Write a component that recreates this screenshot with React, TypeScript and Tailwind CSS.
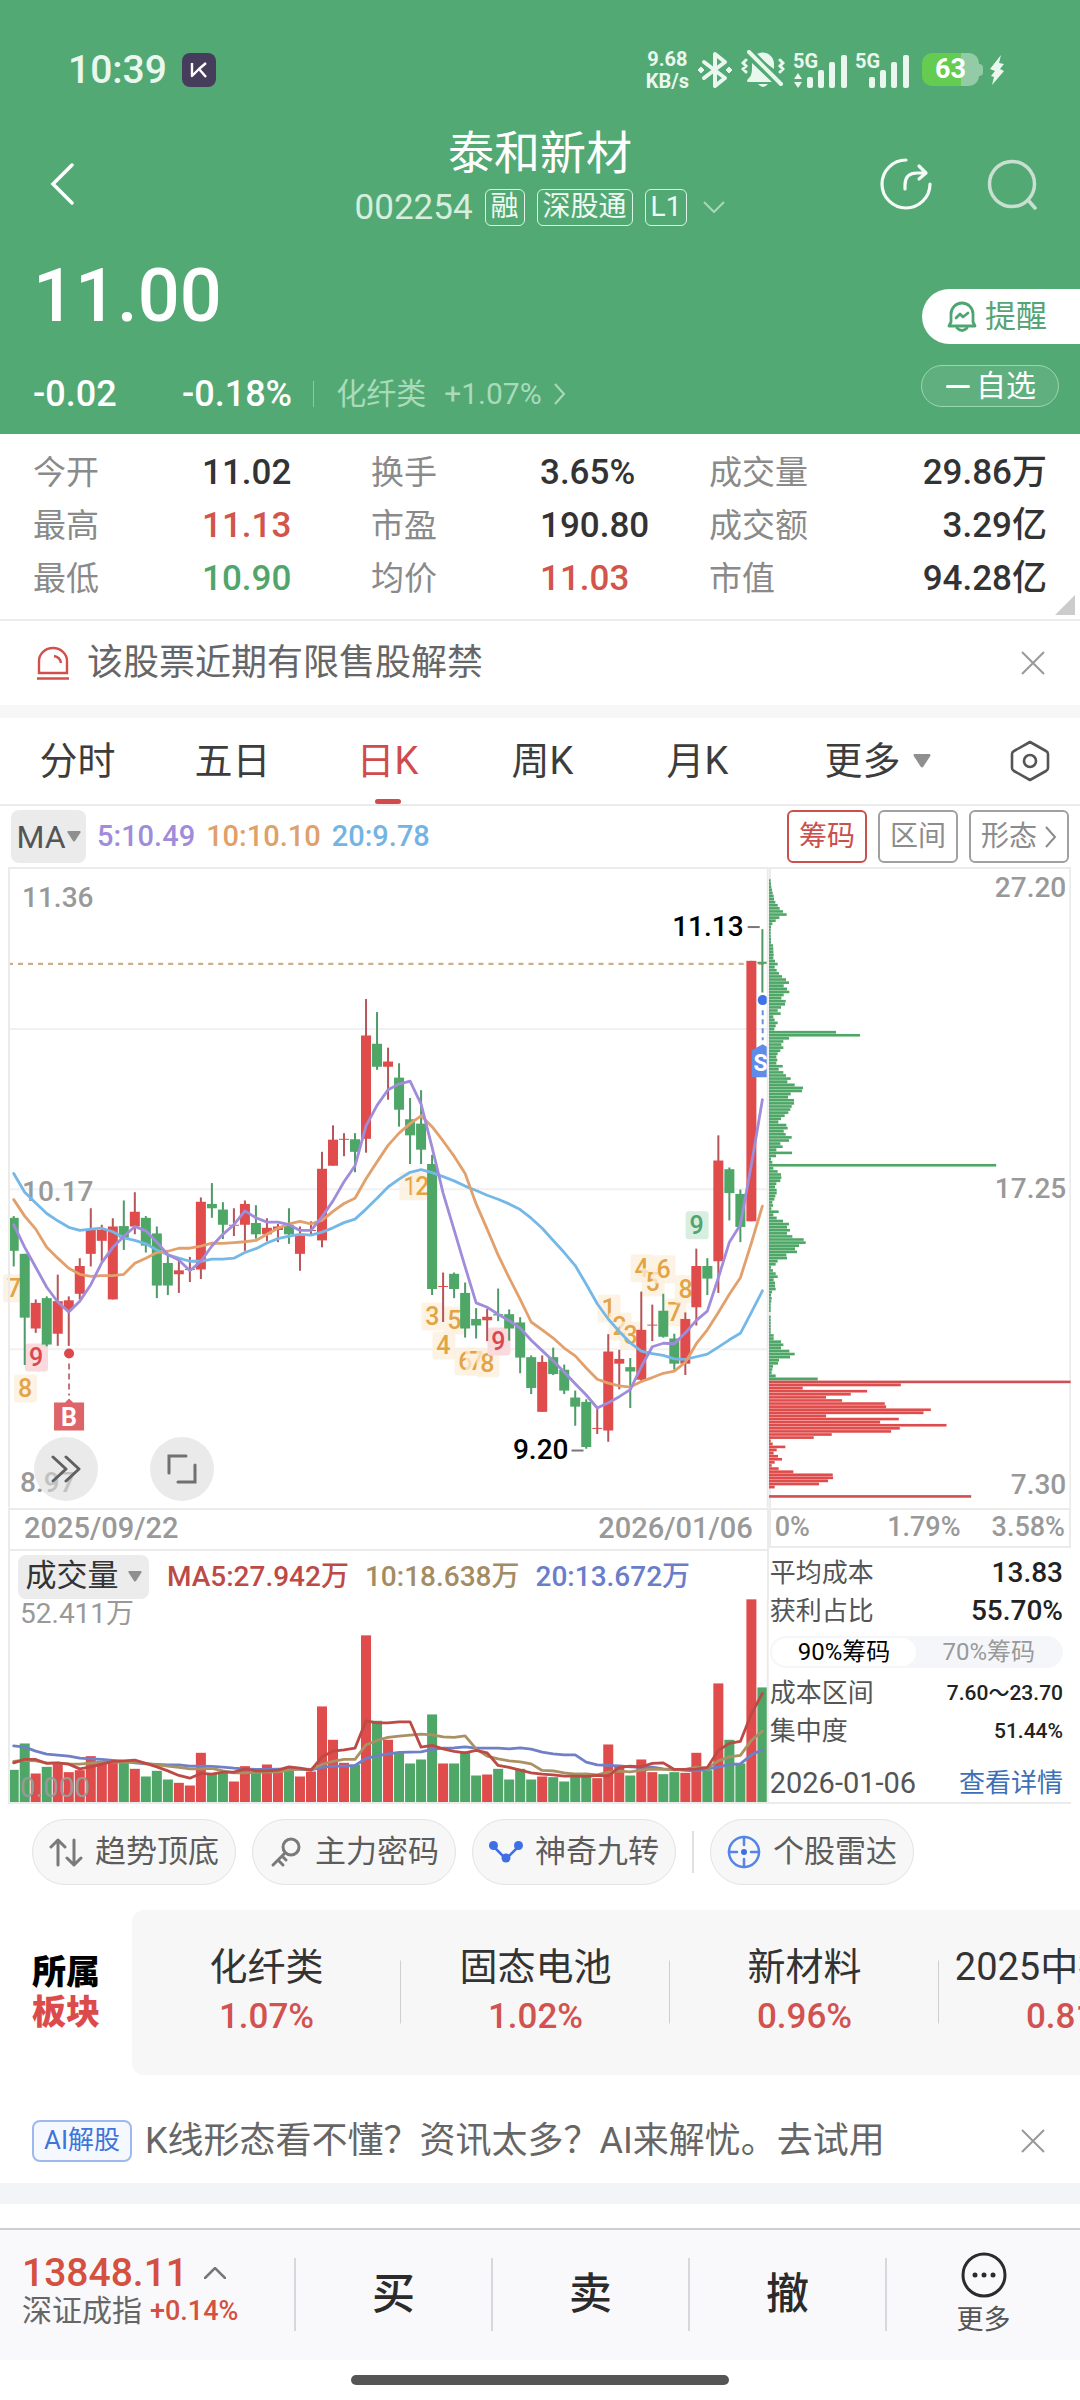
import React from "react";

/* ---------- palette ---------- */
const UP = "#e04b4b";
const UP_WICK = "#b5565a";
const DOWN = "#4ea767";
const DOWN_WICK = "#4f9a68";
const GREY = "#999999";

/* ---------- daily candles: [direction, body top, body bottom, high, low] ---------- */
type Candle = ["u" | "d", number, number, number, number];
const candles: Candle[] = [
  ["d", 822, 898, 818, 934], ["d", 905, 1052, 905, 1161], ["u", 1018, 1077, 1010, 1087],
  ["d", 1007, 1114, 1003, 1118], ["u", 1014, 1089, 953, 1117], ["u", 1012, 1032, 1003, 1117],
  ["u", 933, 997, 915, 1010], ["u", 850, 905, 800, 934], ["u", 850, 875, 838, 922],
  ["u", 842, 1010, 823, 1010], ["d", 841, 868, 782, 896], ["u", 808, 842, 763, 860],
  ["d", 822, 886, 818, 902], ["d", 858, 978, 842, 1007], ["d", 926, 978, 906, 1000],
  ["u", 943, 952, 920, 995], ["u", 940, 942, 912, 970], ["u", 785, 941, 775, 963],
  ["d", 790, 800, 742, 822], ["d", 803, 838, 786, 871], ["u", 838, 840, 800, 864],
  ["u", 790, 838, 782, 898], ["d", 834, 860, 793, 870], ["u", 845, 860, 823, 876],
  ["u", 842, 850, 836, 878], ["d", 838, 860, 800, 882], ["u", 862, 905, 842, 944],
  ["u", 850, 852, 830, 862], ["u", 709, 874, 670, 890], ["u", 642, 702, 609, 702],
  ["u", 640, 642, 627, 680], ["d", 641, 670, 627, 717], ["u", 402, 640, 318, 672],
  ["d", 421, 474, 348, 481], ["u", 462, 474, 430, 550], ["d", 499, 573, 466, 612],
  ["d", 595, 632, 546, 698], ["d", 605, 665, 528, 698], ["d", 698, 986, 677, 1000],
  ["u", 979, 981, 948, 1062], ["d", 951, 986, 948, 1007], ["d", 995, 1077, 971, 1098],
  ["d", 1055, 1070, 1030, 1100], ["u", 1050, 1058, 1032, 1106], ["d", 1044, 1047, 985, 1060],
  ["d", 1044, 1077, 1033, 1105], ["d", 1063, 1144, 1051, 1180], ["d", 1143, 1214, 1139, 1228],
  ["u", 1154, 1269, 1139, 1269], ["d", 1143, 1182, 1121, 1184], ["d", 1172, 1220, 1160, 1228],
  ["d", 1236, 1257, 1220, 1301], ["d", 1246, 1350, 1240, 1354], ["u", 1306, 1308, 1260, 1320],
  ["u", 1130, 1312, 1090, 1338], ["u", 1147, 1158, 1126, 1217], ["d", 1166, 1176, 1145, 1260],
  ["u", 1080, 1195, 992, 1202], ["u", 1068, 1070, 1022, 1106], ["d", 1036, 1096, 997, 1098],
  ["d", 1100, 1158, 1089, 1172], ["u", 1055, 1158, 1040, 1184], ["u", 933, 1028, 893, 1070],
  ["d", 933, 962, 915, 1000], ["u", 690, 922, 632, 995], ["d", 710, 765, 706, 828],
  ["d", 767, 843, 757, 878], ["u", 230, 830, 230, 830], ["d", 232, 237, 157, 303],
];

const ma5 = [838, 890, 936, 982, 1016, 1039, 1014, 976, 925, 890, 865, 842, 852, 878, 907, 919, 944, 922, 887, 860, 838, 806, 822, 832, 832, 838, 851, 851, 820, 783, 739, 702, 610, 563, 527, 514, 507, 560, 660, 765, 850, 935, 1018, 1028, 1044, 1059, 1076, 1104, 1128, 1152, 1177, 1204, 1230, 1260, 1248, 1234, 1218, 1165, 1119, 1111, 1112, 1087, 1058, 1037, 960, 878, 838, 700, 550];
const ma10 = [780, 818, 848, 890, 915, 938, 952, 957, 955, 955, 952, 927, 915, 902, 899, 892, 892, 887, 880, 881, 879, 877, 874, 860, 846, 836, 830, 836, 828, 807, 789, 777, 732, 693, 655, 627, 605, 587, 612, 645, 680, 720, 790, 848, 908, 960, 1010, 1062, 1080, 1099, 1122, 1140, 1168, 1194, 1203, 1209, 1212, 1199, 1190, 1180, 1175, 1155, 1112, 1080, 1040, 998, 960, 880, 795];
const ma20 = [720, 763, 788, 812, 829, 844, 851, 848, 846, 854, 868, 874, 882, 896, 907, 915, 922, 922, 917, 917, 915, 902, 893, 880, 870, 864, 860, 862, 855, 845, 833, 825, 802, 777, 751, 733, 717, 711, 718, 727, 737, 749, 759, 770, 779, 790, 803, 823, 846, 874, 902, 932, 975, 1020, 1055, 1084, 1110, 1129, 1135, 1139, 1147, 1148, 1142, 1136, 1120, 1103, 1088, 1040, 990];

/* ---------- volume ---------- */
const volumes = [713, 634, 724, 704, 694, 720, 714, 672, 686, 688, 692, 710, 733, 716, 742, 752, 760, 662, 724, 722, 748, 702, 720, 697, 712, 704, 733, 718, 523, 623, 692, 698, 310, 566, 623, 662, 694, 682, 547, 694, 694, 658, 730, 727, 710, 742, 710, 742, 733, 735, 748, 722, 724, 738, 637, 700, 730, 682, 720, 726, 720, 722, 662, 714, 454, 623, 694, 202, 466];
const vma5 = [692, 682, 682, 694, 692, 696, 710, 704, 696, 688, 686, 684, 694, 704, 716, 730, 738, 724, 726, 720, 720, 710, 716, 716, 714, 704, 708, 714, 674, 657, 653, 648, 566, 572, 572, 569, 569, 645, 640, 650, 658, 662, 655, 662, 700, 706, 714, 722, 726, 728, 732, 732, 733, 730, 732, 706, 702, 704, 694, 692, 712, 712, 711, 706, 655, 634, 628, 545, 484];
const vma10 = [688, 684, 686, 692, 693, 695, 696, 693, 690, 690, 689, 690, 694, 698, 702, 706, 710, 710, 709, 716, 722, 722, 721, 720, 720, 714, 710, 712, 697, 688, 682, 682, 638, 625, 616, 612, 609, 606, 608, 614, 616, 611, 650, 672, 680, 686, 689, 695, 715, 716, 722, 726, 725, 728, 720, 717, 719, 714, 711, 712, 713, 712, 705, 709, 686, 674, 670, 625, 597];
const vma20 = [641, 645, 657, 666, 669, 672, 678, 680, 682, 685, 688, 692, 695, 697, 698, 698, 702, 702, 703, 705, 708, 710, 712, 712, 711, 711, 712, 713, 706, 702, 702, 700, 679, 671, 665, 661, 660, 659, 652, 648, 647, 644, 648, 648, 648, 650, 647, 651, 660, 665, 668, 668, 690, 698, 700, 701, 704, 706, 705, 710, 712, 715, 716, 710, 705, 697, 695, 668, 653];

/* ---------- chip distribution, top price first ---------- */
const chipsAbove = [5, 6, 7, 9, 11, 14, 15, 19, 26, 32, 42, 53, 31, 20, 10, 6, 5, 5, 5, 6, 6, 12, 13, 13, 14, 13, 18, 26, 17, 23, 30, 39, 51, 60, 44, 54, 61, 44, 37, 50, 48, 36, 26, 35, 13, 17, 26, 20, 16, 201, 273, 60, 43, 37, 43, 34, 26, 22, 25, 22, 41, 29, 43, 51, 65, 55, 77, 102, 99, 65, 57, 75, 75, 68, 64, 58, 47, 36, 28, 52, 56, 44, 50, 68, 60, 34, 41, 22, 69, 21, 6, 10, 681, 13, 26, 36, 37, 34, 22, 18, 23, 23, 19, 16, 10, 12, 7, 29, 13, 23, 42, 60, 54, 63, 54, 70, 104, 110, 90, 78, 84, 52, 54, 26, 20, 6, 12, 20, 26, 14, 18, 18, 20, 9, 6, 8, 7, 5, 5, 5, 0, 5, 5, 5, 5, 5, 5, 14, 14, 36, 43, 36, 61, 77, 63, 30, 27, 12, 10, 8, 20, 146];
const chipsBelow = [904, 395, 101, 294, 245, 171, 219, 347, 351, 485, 463, 171, 389, 333, 532, 392, 366, 188, 134, 5, 11, 49, 23, 14, 27, 39, 17, 8, 29, 73, 191, 192, 177, 150, 17, 0, 0, 606];

const cx = (i: number) => 5.7 + 11 * i;
const py = (v: number) => v * 0.4337 - 6;
const vy = (v: number) => v / 3 - 67;
const line = (data: number[], y: (v: number) => number) =>
  data.map((v, i) => `${cx(i).toFixed(1)},${y(v).toFixed(1)}`).join(" ");

/* ---------- nine-turn markers: [x, y, digit, kind] ---------- */
type Mark = [number, number, string, "y" | "r" | "g"];
const marks: Mark[] = [
  [6, 421, "7", "y"], [17, 521, "8", "y"], [28, 490, "9", "r"],
  [402, 319, "1", "y"], [414, 319, "2", "y"], [424, 449, "3", "y"], [435, 478, "4", "y"],
  [446, 453, "5", "y"], [457, 494, "6", "y"], [468, 494, "7", "y"], [479, 496, "8", "y"],
  [490, 474, "9", "r"], [600, 441, "1", "y"], [611, 459, "2", "y"], [622, 468, "3", "y"],
  [633, 401, "4", "y"], [644, 415, "5", "y"], [655, 402, "6", "y"], [666, 445, "7", "y"],
  [677, 422, "8", "y"], [688, 358, "9", "g"],
];
const markColor = { y: "#e3a445", r: "#d9484f", g: "#4fa56b" };
const markBg = { y: "#fcefdc", r: "#fadadd", g: "#d8eee0" };

function CandleChart() {
  return (
    <svg viewBox="0 0 760 640" className="block h-auto w-full overflow-visible" role="img" aria-label="日K线图">
      {[387, 756, 1125].map((v) => (
        <line key={v} x1="0" x2="760" y1={py(v)} y2={py(v)} stroke="#f1f1f1" strokeWidth="2" />
      ))}
      <line x1="0" x2="759" y1={py(237)} y2={py(237)} stroke="#c9b08a" strokeWidth="2" strokeDasharray="5 5" />
      <g fill={GREY} fontSize="28" fontWeight="500">
        <text x="14" y="40">11.36</text>
        <text x="14" y="334">10.17</text>
        <text x="12" y="624">8.97</text>
      </g>
      {marks.map(([x, y, d, k], i) => (
        <g key={i}>
          <rect x={x - 11} y={y - 14} width="23" height="28" rx="3" fill={markBg[k]} fillOpacity={k === "y" ? 0.75 : 1} />
          <text x={x} y={y + 9} fontSize="25" fontWeight="500" textAnchor="middle" fill={markColor[k]}>{d}</text>
        </g>
      ))}
      {candles.map(([dir, top, bottom, high, low], i) => (
        <g key={i} fill={dir === "u" ? UP : DOWN}>
          <rect x={cx(i) - 1} y={py(high)} width="2" height={py(low) - py(high)} fill={dir === "u" ? UP_WICK : DOWN_WICK} />
          <rect x={cx(i) - 5} y={py(top)} width="10" height={Math.max(1, py(bottom) - py(top))} />
        </g>
      ))}
      <g fill="none" strokeWidth="2.8" strokeLinejoin="round" strokeLinecap="round">
        <polyline points={line(ma20, py)} stroke="#74b8e8" />
        <polyline points={line(ma10, py)} stroke="#e2a06c" />
        <polyline points={line(ma5, py)} stroke="#a08cda" />
      </g>
      <g fontSize="28" fontWeight="500" fill="#000000">
        <text x="735" y="69" textAnchor="end">11.13</text>
        <text x="560" y="591" textAnchor="end">9.20</text>
      </g>
      <g stroke="#777777" strokeWidth="2">
        <line x1="739" x2="751" y1="60" y2="60" />
        <line x1="563" x2="575" y1="583" y2="583" />
      </g>
      <circle cx="61" cy="486" r="5" fill="#dd484d" />
      <line x1="61" x2="61" y1="496" y2="528" stroke="#bf7479" strokeWidth="2" strokeDasharray="6 4" />
      <path d="M46 535h11l4-4 4 4h11v28H46z" fill="#dd6468" />
      <text x="61" y="558" fontSize="25" fontWeight="700" textAnchor="middle" fill="#ffffff">B</text>
      <circle cx="754" cy="133" r="5" fill="#3f72e6" />
      <line x1="754" x2="754" y1="143" y2="173" stroke="#6b90dd" strokeWidth="2" strokeDasharray="5 4" />
      <path d="M743 183l11-6 5 3v30h-16z" fill="#5e8ce8" />
      <text x="752" y="204" fontSize="23" fontWeight="700" textAnchor="middle" fill="#ffffff">S</text>
      <path d="M1 640V1h758v639" fill="none" stroke="#ebebeb" strokeWidth="2" />
    </svg>
  );
}

function VolumeChart() {
  return (
    <svg viewBox="0 0 760 203" className="block h-auto w-full" role="img" aria-label="成交量图">
      {volumes.map((v, i) => (
        <rect key={i} x={cx(i) - 5} y={vy(v)} width="10" height={203 - vy(v)} fill={candles[i][0] === "u" ? UP : DOWN} />
      ))}
      <g fill={GREY} fontSize="28">
        <text x="12" y="24">52.411万</text>
        <text x="12" y="198">0.000</text>
      </g>
      <g fill="none" strokeWidth="2.8" strokeLinejoin="round" strokeLinecap="round">
        <polyline points={line(vma20, vy)} stroke="#6f80c8" />
        <polyline points={line(vma10, vy)} stroke="#a99164" />
        <polyline points={line(vma5, vy)} stroke="#bd4a45" />
      </g>
      <path d="M1 0V203M759 0V203" stroke="#ebebeb" strokeWidth="2" />
    </svg>
  );
}

function ChipChart() {
  const rows = [...chipsAbove, ...chipsBelow];
  return (
    <svg viewBox="0 0 302 640" className="block h-auto w-full" role="img" aria-label="筹码分布图">
      <path d="M1 640V1h300v639" fill="none" stroke="#ebebeb" strokeWidth="2" />
      {rows.map((w, i) => {
        const above = i < chipsAbove.length;
        const y = 12.2 + i * 3.092;
        return (
          <g key={i}>
            <rect x="0" y={y} width={w / 3} height="2.6" fill={above ? DOWN : w > 600 ? "#cf4f52" : UP} />
            <rect x="0" y={y + 2.6} width={Math.min(w, rows[i + 1] ?? 0) / 3} height="0.5" fill={above ? "#7fc08f" : "#ec8a86"} />
          </g>
        );
      })}
      <g fill={GREY} fontSize="28" fontWeight="500" textAnchor="end">
        <text x="297" y="30">27.20</text>
        <text x="297" y="331">17.25</text>
        <text x="297" y="626">7.30</text>
      </g>
    </svg>
  );
}

/* ---------- small shared pieces ---------- */
function Caret({ className }: { className: string }) {
  return (
    <svg viewBox="0 0 14 11" className={className} aria-hidden="true">
      <path d="M1 0h12q1 0.500.5 1.500L8 10q-1 1.200-2 0L0.500 1.500Q0 0 1 0z" fill="#8f8f8f" />
    </svg>
  );
}

function CloseButton() {
  return (
    <button type="button" aria-label="关闭" className="flex size-6 items-center justify-center">
      <svg viewBox="0 0 24 24" className="size-6" fill="none" stroke="#999999" strokeWidth="2">
        <path d="M1 1l22 22M23 1L1 23" />
      </svg>
    </button>
  );
}

function Signal({ arrows }: { arrows?: boolean }) {
  return (
    <svg viewBox="0 0 55 40" className="h-10 w-[55px] overflow-visible" fill="#eaf7ee" aria-hidden="true">
      <text x="0" y="18" fontSize="20" fontWeight="700">5G</text>
      <rect x="14" y="27" width="6" height="11" rx="2" />
      <rect x="25" y="20" width="6" height="18" rx="2" />
      <rect x="36" y="12" width="6" height="26" rx="2" />
      <rect x="48" y="5" width="6" height="33" rx="2" />
      {arrows && <path d="M5 23l4 6H1zM5 38l4-6H1z" />}
    </svg>
  );
}

function StatusBar() {
  return (
    <div className="flex h-[84px] items-center pt-[19px] pr-[75px] pl-[68px] text-[#eaf7ee]">
      <span className="text-[39px] leading-10 font-medium">10:39</span>
      <svg viewBox="0 0 34 34" className="ml-[15px] size-[34px]" aria-hidden="true">
        <rect width="34" height="34" rx="8" fill="#463d5c" />
        <path d="M10 10v13l7-7 7 8M24 10l-7 6" fill="none" stroke="#fff" strokeWidth="2.400" strokeLinejoin="round" />
      </svg>
      <div className="ml-auto text-center text-xl leading-[22px] font-bold">
        <div>9.68</div>
        <div>KB/s</div>
      </div>
      <svg viewBox="0 0 36 38" className="ml-2 h-[38px] w-9" aria-hidden="true">
        <path d="M7 11l21 16-10 8V3l10 8L7 27" fill="none" stroke="#eaf7ee" strokeWidth="4" strokeLinejoin="round" strokeLinecap="round" />
        <path d="M4 16l3 3-3 3-3-3zM32 16l3 3-3 3-3-3z" fill="#eaf7ee" stroke="#eaf7ee" />
      </svg>
      <svg viewBox="0 0 44 40" className="ml-2 h-10 w-11" aria-hidden="true">
        <path d="M14 5c8-6 19-1 19 9v5zM11 13l20 19H7q-2-1 0-3 4-3 4-10z" fill="#eaf7ee" />
        <path d="M17 34h10q-5 6-10 0z" fill="#eaf7ee" />
        <path d="M8 2l32 32" stroke="#53a974" strokeWidth="9" />
        <path d="M8 2l32 32" stroke="#eaf7ee" strokeWidth="4" strokeLinecap="round" />
        <path d="M5 10l-3 3 3 3-3 3 3 3M39 10l3 3-3 3 3 3-3 3" fill="none" stroke="#eaf7ee" strokeWidth="3" strokeLinecap="round" />
      </svg>
      <div className="ml-2 flex gap-[7px]">
        <Signal arrows />
        <Signal />
      </div>
      <div className="ml-3 flex items-center">
        <div className="flex h-[33px] w-[57px] items-center justify-center rounded-[10px] bg-linear-to-r from-[#64cc50] from-69% to-[#93cba6] to-69% text-[27px] font-bold text-white">
          63
        </div>
        <div className="h-3 w-1 rounded-r bg-[#93cba6]" />
      </div>
      <svg viewBox="0 0 16 32" className="ml-[6px] h-8 w-4" aria-hidden="true">
        <path d="M12 1L1 15l5 2-4 5 3 1-2 8L15 17l-4-2 4-5-5-1z" fill="#eaf7ee" />
      </svg>
    </div>
  );
}

function Tag({ children }: { children: React.ReactNode }) {
  return (
    <span className="flex h-[37px] items-center rounded-md border border-[#dff2e6] px-[5px] text-[28px] leading-none text-[#eefaf2]">
      {children}
    </span>
  );
}

function Header() {
  return (
    <header className="bg-[#53a974] pt-[18px] pb-[19px]">
      <StatusBar />
      <div className="grid grid-cols-[1fr_auto_1fr] items-center px-[50px] pt-[23px]">
        <button type="button" aria-label="返回" className="mt-4 w-6">
          <svg viewBox="0 0 24 42" className="h-[42px] w-6" fill="none" stroke="#fff" strokeWidth="3.500" strokeLinecap="round">
            <path d="M22 2L3 21l19 19" />
          </svg>
        </button>
        <div className="flex flex-col items-center">
          <h1 className="text-[46px] leading-[56px] text-white">泰和新材</h1>
          <div className="mt-[7px] flex h-[38px] items-center gap-3">
            <span className="text-[35px] leading-none text-[#d5eedd]">002254</span>
            <Tag>融</Tag>
            <Tag>深股通</Tag>
            <Tag>L1</Tag>
            <svg viewBox="0 0 22 12" className="ml-1 h-3 w-[22px]" fill="none" stroke="#a9d8b9" strokeWidth="2">
              <path d="M1 1l10 10L21 1" />
            </svg>
          </div>
        </div>
        <div className="mt-4 -mr-2 flex justify-end gap-[54px]">
          <button type="button" aria-label="分享">
            <svg viewBox="0 0 52 52" className="size-[52px]" fill="none" stroke="#f4fbf6" strokeWidth="3.200" strokeLinecap="round" strokeLinejoin="round">
              <path d="M26 2a24 24 0 1 0 24 24" />
              <path d="M25 31v-4q0-12 12-12h8M39 8l7 7-7 6" />
            </svg>
          </button>
          <button type="button" aria-label="搜索">
            <svg viewBox="0 0 52 52" className="size-[52px]" fill="none" stroke="#c9dfd1" strokeWidth="3.500" strokeLinecap="round">
              <circle cx="26" cy="26" r="22.500" />
              <path d="M42 42l7 8" />
            </svg>
          </button>
        </div>
      </div>
      <div className="mt-[5px] flex items-end justify-between pl-[33px]">
        <div>
          <div className="text-[74px] leading-[130px] font-medium text-white">11.00</div>
          <div className="mt-[12px] flex h-[42px] items-center text-white">
            <span className="w-[149px] text-4xl font-medium">-0.02</span>
            <span className="text-4xl font-medium">-0.18%</span>
            <span className="ml-[21px] h-[26px] w-px bg-[#8fc9a4]" />
            <a href="#sector" className="ml-[22px] flex items-center text-3xl text-[#a9dbbb]">
              化纤类
              <span className="ml-[18px]">+1.07%</span>
              <svg viewBox="0 0 12 22" className="ml-3 h-[22px] w-3" fill="none" stroke="currentColor" strokeWidth="2">
                <path d="M1 1l9 10-9 10" />
              </svg>
            </a>
          </div>
        </div>
        <div className="flex flex-col items-end gap-[21px] pb-2">
          <button type="button" className="flex h-[55px] w-[158px] items-center gap-2 rounded-l-full bg-white pl-[25px] text-[31px] leading-none text-[#55a476]">
            <svg viewBox="0 0 30 31" className="h-[31px] w-[30px] shrink-0" fill="none" stroke="#4fa572" strokeWidth="2.800" strokeLinejoin="round" strokeLinecap="round">
              <path d="M4 21V13a11 11 0 0 1 22 0v8l2 4H2z" />
              <path d="M10 27q5 5 10 0M9 17l4-4 3 3 5-4" />
            </svg>
            提醒
          </button>
          <button type="button" className="mr-[21px] flex h-[42px] w-[138px] items-center gap-[6px] rounded-full border border-[#9ad6b0] bg-white/8 pl-6 text-3xl leading-none text-white">
            <span className="h-[3px] w-6 rounded bg-white" />
            自选
          </button>
        </div>
      </div>
    </header>
  );
}

const quotes: [string, string, string][][] = [
  [["今开", "11.02", "text-[#333333]"], ["换手", "3.65%", "text-[#333333]"], ["成交量", "29.86万", "text-[#333333]"]],
  [["最高", "11.13", "text-[#d2544a]"], ["市盈", "190.80", "text-[#333333]"], ["成交额", "3.29亿", "text-[#333333]"]],
  [["最低", "10.90", "text-[#4fa56b]"], ["均价", "11.03", "text-[#d2544a]"], ["市值", "94.28亿", "text-[#333333]"]],
];

function Quotes() {
  return (
    <section className="relative border-b-2 border-[#ebebeb] px-[33px] pt-3 pb-[14px]">
      {quotes.map((row, r) => (
        <dl key={r} className="grid grid-cols-[1fr_1fr_1fr_1fr_1fr_1fr] leading-[53px]">
          {row.map(([label, value, color], c) => (
            <React.Fragment key={label}>
              <dt className="text-[33px] text-[#8a8a8a]">{label}</dt>
              <dd className={`text-[35px] font-medium whitespace-nowrap ${color} ${c === 2 ? "flex justify-end" : ""}`}>{value}</dd>
            </React.Fragment>
          ))}
        </dl>
      ))}
      <svg viewBox="0 0 20 20" className="absolute right-[5px] bottom-1 size-5" aria-hidden="true">
        <path d="M20 0v20H0z" fill="#cccccc" />
      </svg>
    </section>
  );
}

function Notice() {
  return (
    <section className="flex h-[84px] items-center pr-[35px] pl-9">
      <svg viewBox="0 0 34 34" className="h-[34px] w-[34px]" fill="none" stroke="#d2504c" strokeWidth="2.400">
        <path d="M3 27V15a14 13 0 0 1 28 0v12z" />
        <path d="M1 32.500h32M18 10q6 1 7 7" />
      </svg>
      <span className="ml-[17px] text-4xl text-[#666666]">该股票近期有限售股解禁</span>
      <div className="ml-auto flex"><CloseButton /></div>
    </section>
  );
}

function PeriodTabs() {
  const tabs = ["分时", "五日", "日K", "周K", "月K"];
  return (
    <nav className="grid h-[88px] grid-cols-[155fr_155fr_155fr_155fr_155fr_205fr_100fr] border-b-2 border-[#ebebeb] text-[38px] text-[#3d3d3d]">
      {tabs.map((t) => (
        <button key={t} type="button" className={t === "日K" ? "relative text-[#d04c4c]" : ""}>
          {t}
          {t === "日K" && <span className="absolute bottom-0 left-1/2 h-[5px] w-[26px] -translate-x-1/2 rounded-full bg-[#d04c4c]" />}
        </button>
      ))}
      <button type="button" className="flex items-center justify-center gap-3">
        更多
        <Caret className="h-[14px] w-[18px]" />
      </button>
      <button type="button" aria-label="设置" className="flex items-center justify-center">
        <svg viewBox="0 0 40 42" className="h-[42px] w-10" fill="none" stroke="#555555" strokeWidth="2.600" strokeLinejoin="round">
          <path d="M20 2l16 9q2 1 2 3v14q0 2-2 3l-16 9-16-9q-2-1-2-3V14q0-2 2-3z" />
          <circle cx="20" cy="21" r="6" />
        </svg>
      </button>
    </nav>
  );
}

function IndicatorRow() {
  return (
    <div className="flex h-[61px] items-center px-[11px]">
      <button type="button" className="flex h-[53px] w-[75px] items-center justify-center gap-px rounded-lg bg-[#ebebeb] text-[32px] text-[#555555]">
        MA
        <Caret className="h-[11px] w-[14px]" />
      </button>
      <div className="ml-[11px] flex gap-[11px] text-[29px] font-medium">
        <span className="text-[#a08cda]">5:10.49</span>
        <span className="text-[#e0a06a]">10:10.10</span>
        <span className="text-[#74b4e2]">20:9.78</span>
      </div>
      <div className="ml-auto flex gap-[11px] text-[28px] text-[#8c8c8c]">
        <button type="button" className="h-[53px] w-20 rounded-md border-2 border-[#c9504c] text-[#c9504c]">筹码</button>
        <button type="button" className="h-[53px] w-20 rounded-md border-2 border-[#a0a0a0]">区间</button>
        <button type="button" className="flex h-[53px] w-[100px] items-center justify-center gap-2 rounded-md border-2 border-[#a0a0a0]">
          形态
          <svg viewBox="0 0 12 22" className="h-[22px] w-3" fill="none" stroke="currentColor" strokeWidth="2">
            <path d="M1 1l9 10-9 10" />
          </svg>
        </button>
      </div>
    </div>
  );
}

function ChartArea() {
  return (
    <section className="mr-[9px] ml-2 grid grid-cols-[760fr_302fr] border-b-2 border-[#ebebeb]">
      <div>
        <div className="relative">
          <CandleChart />
          <button type="button" aria-label="快进" className="absolute bottom-[7px] left-[26px] flex size-16 items-center justify-center rounded-full bg-[#dcdcdc]/60">
            <svg viewBox="0 0 30 28" className="h-7 w-[30px]" fill="none" stroke="#606060" strokeWidth="3" strokeLinecap="round" strokeLinejoin="round">
              <path d="M2 2l13 12L2 26M15 2l13 12-13 12" />
            </svg>
          </button>
          <button type="button" aria-label="全屏" className="absolute bottom-[7px] left-[142px] flex size-16 items-center justify-center rounded-full bg-[#dcdcdc]/60">
            <svg viewBox="0 0 30 30" className="size-[30px]" fill="none" stroke="#707070" strokeWidth="3" strokeLinecap="round">
              <path d="M2 19V2h17M28 11v17H11" />
            </svg>
          </button>
        </div>
        <div className="flex h-[43px] items-center justify-between border-2 border-[#ebebeb] pr-[14px] pl-[14px] text-[29px] font-medium text-[#999999]">
          <span>2025/09/22</span>
          <span>2026/01/06</span>
        </div>
        <div className="flex h-12 items-center gap-4 border-x-2 border-[#ebebeb] pt-1 pl-2 text-[28px] font-medium whitespace-nowrap">
          <button type="button" className="mr-[2px] flex h-11 w-[131px] items-center justify-center gap-[9px] rounded-lg bg-[#ececec] text-[31px] font-normal text-[#333333]">
            成交量
            <Caret className="h-[11px] w-[14px]" />
          </button>
          <span className="text-[#bd4a45]">MA5:27.942万</span>
          <span className="text-[#a48c62]">10:18.638万</span>
          <span className="text-[#6a7dcb]">20:13.672万</span>
        </div>
        <VolumeChart />
      </div>
      <div className="flex flex-col">
        <ChipChart />
        <div className="flex h-10 items-center justify-between border-2 border-[#ebebeb] px-1 text-[27px] font-medium text-[#999999]">
          <span className="flex-1">0%</span>
          <span className="mr-[31px]">1.79%</span>
          <span>3.58%</span>
        </div>
        <div className="flex flex-1 flex-col pt-[6px] pr-2 pl-px text-[26px] leading-[38px] text-[#555555]">
          <div className="flex items-center justify-between">平均成本<span className="text-[28px] font-medium text-[#222222]">13.83</span></div>
          <div className="flex items-center justify-between">获利占比<span className="text-[28px] font-medium text-[#222222]">55.70%</span></div>
          <div className="my-[6px] flex h-8 rounded-full bg-[#f5f6f9] p-[2px] text-2xl">
            <button type="button" className="flex flex-1 items-center justify-center rounded-full bg-white text-black">90%筹码</button>
            <button type="button" className="flex flex-1 items-center justify-center text-[#999999]">70%筹码</button>
          </div>
          <div className="flex items-center justify-between">成本区间<span className="text-[21px] font-medium text-[#222222]">7.60～23.70</span></div>
          <div className="flex items-center justify-between">集中度<span className="text-[21px] font-medium text-[#222222]">51.44%</span></div>
          <div className="mt-auto flex items-center justify-between">
            <span className="text-[29px]">2026-01-06</span>
            <a href="#details" className="text-[#3c70b8]">查看详情</a>
          </div>
        </div>
      </div>
    </section>
  );
}

function ToolChip({ label, children }: { label: string; children: React.ReactNode }) {
  return (
    <button type="button" className="flex h-[66px] w-[204px] items-center justify-center gap-3 rounded-full border border-[#e3e3e3] bg-[#f7f7f7] text-[31px] whitespace-nowrap text-[#5c5c5c]">
      <svg viewBox="0 0 34 34" className="size-[34px] shrink-0" fill="none" strokeLinecap="round" strokeLinejoin="round" aria-hidden="true">
        {children}
      </svg>
      {label}
    </button>
  );
}

function Tools() {
  return (
    <section className="flex h-[106px] items-center gap-4 pb-[9px] pl-8">
      <ToolChip label="趋势顶底">
        <path d="M9 30V5M2 12l7-7 7 7M25 5v25M18 23l7 7 7-7" stroke="#7a7a7a" strokeWidth="3" />
      </ToolChip>
      <ToolChip label="主力密码">
        <g stroke="#7a7a7a" strokeWidth="3">
          <circle cx="22" cy="12" r="8" />
          <path d="M16 18L4 30M9 25l5 5M13 21l4 4" />
        </g>
      </ToolChip>
      <ToolChip label="神奇九转">
        <path d="M4 11l13 13L30 11" stroke="#3f6fe4" strokeWidth="2.500" />
        <g fill="#3f6fe4">
          <circle cx="4.500" cy="10.500" r="4.500" />
          <circle cx="17" cy="23" r="4.500" />
          <circle cx="29.500" cy="10.500" r="4.500" />
        </g>
      </ToolChip>
      <span className="h-[42px] w-[2px] bg-[#e0e0e0]" />
      <ToolChip label="个股雷达">
        <circle cx="17" cy="17" r="15" stroke="#5585e6" strokeWidth="2.500" />
        <path d="M17 2v8M17 24v8M2 17h8M24 17h8" stroke="#5585e6" strokeWidth="2.500" />
        <circle cx="17" cy="17" r="3" fill="#3f6fe4" />
      </ToolChip>
    </section>
  );
}

const sectors = [["化纤类", "1.07%"], ["固态电池", "1.02%"], ["新材料", "0.96%"], ["2025中报预增", "0.81%"]];

function Sectors() {
  return (
    <section id="sector" className="flex items-center overflow-hidden pl-8">
      <h2 className="w-[100px] shrink-0 text-[34px] leading-10 font-black text-black">
        所属
        <br />
        <span className="text-[#dc4b4b]">板块</span>
      </h2>
      <ul className="flex h-[165px] shrink-0 items-center rounded-l-xl bg-[#f7f7f7]">
        {sectors.map(([name, pct], i) => (
          <li key={name} className={`relative w-[269px] text-center whitespace-nowrap ${i < 3 ? "after:absolute after:top-1/2 after:right-0 after:h-[63px] after:w-px after:-translate-y-1/2 after:bg-[#cfcfcf]" : ""}`}>
            <div className="text-[38px] leading-[50px] text-[#333333]">{name}</div>
            <div className="text-[35px] leading-[50px] font-medium text-[#d1524f]">{pct}</div>
          </li>
        ))}
      </ul>
    </section>
  );
}

function AiBanner() {
  return (
    <section className="flex h-[108px] items-center pt-6 pr-[35px] pl-8">
      <span className="flex h-[42px] w-[100px] items-center justify-center rounded-lg border-2 border-[#9db9ee] bg-[#f5f9ff] text-[26px] text-[#3f74d8]">AI解股</span>
      <a href="#ai" className="ml-[13px] text-4xl text-[#666666]">K线形态看不懂？资讯太多？AI来解忧。去试用</a>
      <div className="ml-auto flex"><CloseButton /></div>
    </section>
  );
}

function TradeBar() {
  return (
    <footer className="grid h-[132px] grid-cols-[294fr_197fr_197fr_197fr_195fr] items-center border-t-2 border-[#cfcfcf] bg-[#f9f9fc]">
      <div className="pb-2 pl-[22px] whitespace-nowrap">
        <button type="button" className="flex items-center gap-4 text-[39px] leading-10 font-medium text-[#d4503f]">
          13848.11
          <svg viewBox="0 0 22 12" className="h-3 w-[22px]" fill="none" stroke="#777777" strokeWidth="2.500" strokeLinecap="round">
            <path d="M1 11L11 1l10 10" />
          </svg>
        </button>
        <div className="flex items-center gap-2 text-3xl leading-9 text-[#666666]">
          深证成指<span className="text-[27px] font-medium text-[#d4503f]">+0.14%</span>
        </div>
      </div>
      {["买", "卖", "撤"].map((t) => (
        <button key={t} type="button" className="h-[73px] border-l-2 border-[#d8d8dc] text-[43px] leading-none font-medium text-[#2b2b2b]">
          {t}
        </button>
      ))}
      <button type="button" className="flex h-[73px] flex-col items-center justify-center border-l-2 border-[#d8d8dc] text-[27px] leading-9 text-[#555555]">
        <svg viewBox="0 0 46 46" className="size-[46px] shrink-0" aria-hidden="true">
          <circle cx="23" cy="23" r="21" fill="none" stroke="#2b2b2b" strokeWidth="3" />
          <g fill="#2b2b2b">
            <circle cx="14" cy="23" r="2.500" />
            <circle cx="23" cy="23" r="2.500" />
            <circle cx="32" cy="23" r="2.500" />
          </g>
        </svg>
        <span className="mt-1">更多</span>
      </button>
    </footer>
  );
}

export default function App() {
  return (
    <div className="min-h-screen w-full overflow-x-hidden bg-white [font-family:Roboto,'Noto_Sans_CJK_SC',sans-serif]">
      <Header />
      <main>
        <Quotes />
        <Notice />
        <div className="h-[13px] bg-[#f7f7f7]" />
        <PeriodTabs />
        <IndicatorRow />
        <ChartArea />
        <Tools />
        <Sectors />
        <AiBanner />
        <div className="h-[21px] bg-[#f3f4f8]" />
        <div className="h-6" />
      </main>
      <TradeBar />
      <div className="mx-auto mt-[15px] h-[10px] w-[378px] rounded-full bg-[#555555]" />
    </div>
  );
}
